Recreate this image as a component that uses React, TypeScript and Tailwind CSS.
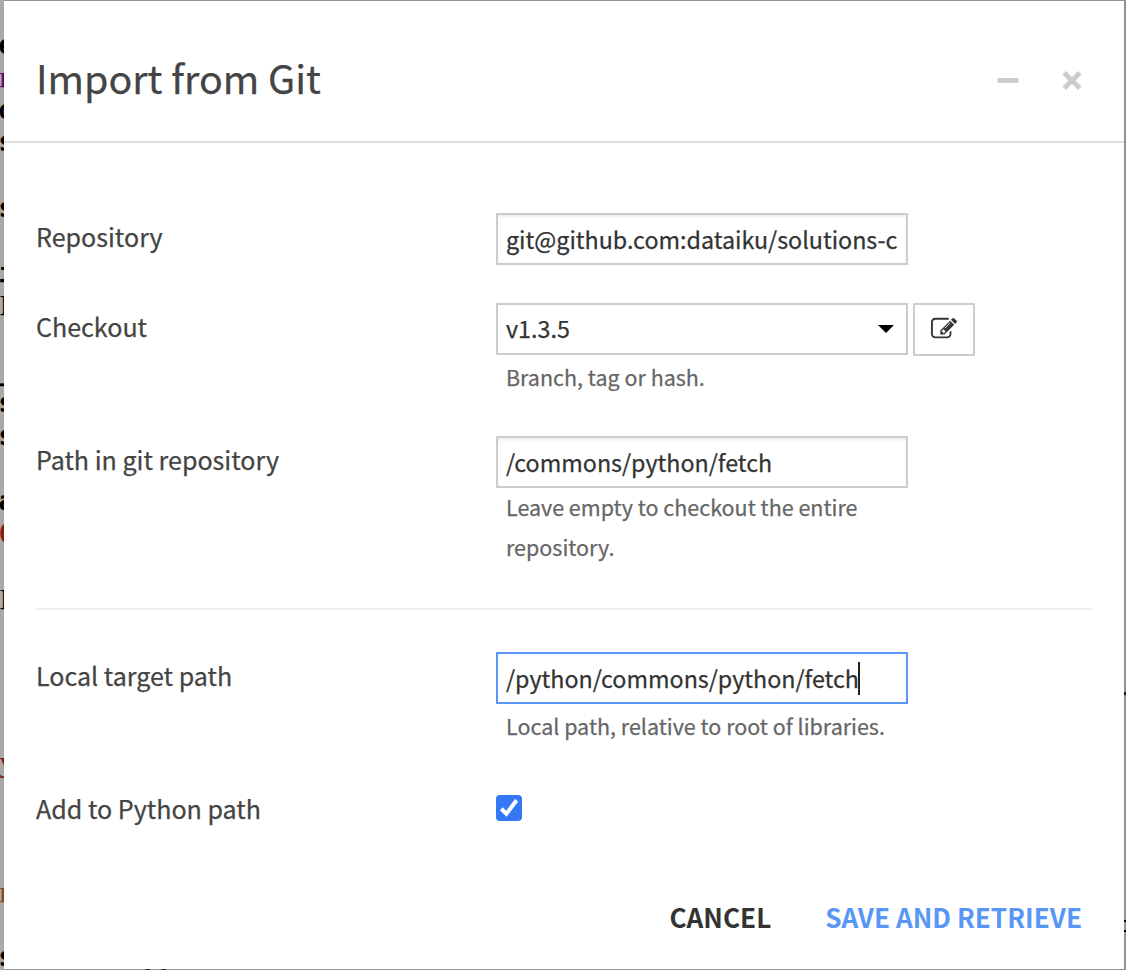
import React from "react";

const serif = "font-['Liberation_Serif',serif] font-normal text-[30px] pl-[1px]";

const codeLines: [string, string][] = [
  ["", ""], ["e", ""], ["r", `text-[#5b0a78] ${serif}`], ["o", ""], ["s", ""], ["", ""], ["s", ""], ["", ""],
  ["i", ""], ["I", serif], ["", ""], ["_", ""], ["s", ""], ["s", ""], ["", ""], ["a", ""],
  ["C", "text-[#8b1a1a]"], ["", ""], ["I", serif], ["", ""], ["", ""], ["", ""], ["", ""],
  ["y", `text-[#7b1d1d] ${serif}`], ["", ""], ["", ""], ["", ""], ["r", `text-[#7d4a1e] ${serif}`], ["", ""], ["s", ""],
];

function Row({ label, className, children }: { label: string; className: string; children: React.ReactNode }) {
  return (
    <div className={`flex ${className}`}>
      <div className="w-[460px] shrink-0 pt-[3px] text-[25.07px] leading-[40px] text-[#444444]">{label}</div>
      <div className="w-[480px]">{children}</div>
    </div>
  );
}

const fieldClass =
  "flex h-[52px] w-[412px] items-center overflow-hidden whitespace-pre border-2 pl-2 pr-[6px] text-[23.28px] leading-[48px] text-[#333333] outline-none [-webkit-text-stroke:0.25px]";
const helpClass = "w-[412px] pl-[10px] text-[21.49px] leading-[40px] text-[#666666]";

export default function App() {
  return (
    <div className="relative h-[970px] w-[1126px] overflow-hidden bg-[#929292] font-['Noto_Sans_CJK_SC',sans-serif] [-webkit-text-stroke:0.25px]">
      <div
        aria-hidden="true"
        className="absolute left-0 top-0 h-[970px] w-1 overflow-hidden bg-[#aaa9a8] font-['DejaVu_Sans_Mono',monospace] text-[26px] font-bold leading-[32.6px] text-black"
      >
        <div className="-ml-[1.5px] -mt-[4px]">
          {codeLines.map(([ch, color], i) => (
            <div key={i} className={`h-[32.6px] leading-[32.6px] ${color}`}>{ch}</div>
          ))}
        </div>
      </div>
      <div aria-hidden="true" className="absolute right-0 top-[692px] h-[3px] w-[2px] bg-[#1c1c1c]" />
      <div aria-hidden="true" className="absolute right-0 top-[920px] h-[12px] w-[2px] border-y-2 border-black" />
      <div aria-hidden="true" className="absolute left-[145px] top-[969px] h-px w-[5px] bg-[#333333]" />
      <div aria-hidden="true" className="absolute left-[161px] top-[969px] h-px w-[5px] bg-[#333333]" />
      <div className="relative ml-1 h-[969px] w-[1120px] pt-px">
        <div className="flex h-[968px] flex-col bg-white">
          <header className="flex h-[142px] shrink-0 items-center justify-between border-b-2 border-[#dddddd] pl-8 pr-[41px]">
            <h1 className="pt-[12px] text-[39.4px] leading-[60px] text-[#444444]">Import from Git</h1>
            <div className="flex items-center gap-[42px] pt-[19px]">
              <svg width="22" height="22" viewBox="0 0 22 22">
                <rect x="0.5" y="8" width="21" height="5" rx="0.8" fill="#cccccc" />
              </svg>
              <svg width="22" height="22" viewBox="0 0 22 22">
                <path d="M3.2 2.7L18.8 18.3M18.8 2.7L3.2 18.3" stroke="#cccccc" strokeWidth="5" />
              </svg>
            </div>
          </header>
          <main className="flex flex-col px-8 pt-[70px]">
            <Row label="Repository" className="h-[90px]">
              <input
                readOnly
                value="git@github.com:dataiku/solutions-c"
                className={`${fieldClass} border-[#cccccc] shadow-[inset_0_2px_3px_rgba(0,0,0,0.075)]`}
              />
            </Row>
            <Row label="Checkout" className="h-[133px]">
              <div className="flex gap-[5px]">
                <div className={`${fieldClass} justify-between border-[#cccccc]`}>
                  <span className="pb-[2px]">v1.3.5</span>
                  <svg width="16" height="8" viewBox="0 0 16 8" className="mr-[6px]">
                    <path d="M0 0H16L8 8Z" fill="#000" />
                  </svg>
                </div>
                <button aria-label="Edit" className="flex h-[53px] w-[62px] items-center justify-center border-2 border-[#cccccc] pb-[2px] text-[#333333]">
                  <svg width="26" height="26" viewBox="0 0 1792 1792" fill="currentColor">
                    <path d="M888 1184l116-116-152-152-116 116v56h96v96h56zm440-720q-16-16-33 1l-350 350q-17 17-1 33t33-1l350-350q17-17 1-33zm80 594v190q0 119-84.5 203.5t-203.5 84.5h-832q-119 0-203.5-84.5t-84.5-203.5v-832q0-119 84.5-203.5t203.5-84.5h832q63 0 117 25 15 7 18 23 3 17-9 29l-49 49q-14 14-32 8-23-6-45-6h-832q-66 0-113 47t-47 113v832q0 66 47 113t113 47h832q66 0 113-47t47-113v-126q0-13 9-22l64-64q15-15 35-7t20 29zm-96-738l288 288-672 672h-288v-288zm444 132l-92 92-288-288 92-92q28-28 68-28t68 28l152 152q28 28 28 68t-28 68z" />
                  </svg>
                </button>
              </div>
              <p className={`${helpClass} pt-px`}>Branch, tag or hash.</p>
            </Row>
            <Row label="Path in git repository" className="h-[172px]">
              <input
                readOnly
                value="/commons/python/fetch"
                className={`${fieldClass} border-[#cccccc] shadow-[inset_0_2px_3px_rgba(0,0,0,0.075)]`}
              />
              <p className={`${helpClass} -mt-px`}>Leave empty to checkout the entire repository.</p>
            </Row>
            <div className="mb-[42px] h-[2px] bg-[#eeeeee]" />
            <Row label="Local target path" className="h-[133px]">
              <div className={`${fieldClass} border-[#5897f5]`}>
                <span>/python/commons/python/fetch</span>
                <span className="-ml-px h-[33px] w-[2px] bg-[#222222]" />
              </div>
              <p className={`${helpClass} pt-[2px]`}>Local path, relative to root of libraries.</p>
            </Row>
            <Row label="Add to Python path" className="h-[70px]">
              <div role="checkbox" aria-checked="true" className="mt-[10px] flex size-[26px] items-center justify-center rounded-[4px] bg-[#3478f6]">
                <svg width="26" height="26" viewBox="0 0 26 26">
                  <path d="M5.3 13.8L10.4 18.8L20.6 5.2" fill="none" stroke="#fff" strokeWidth="4" />
                </svg>
              </div>
            </Row>
          </main>
          <footer className="mt-auto flex h-[104px] items-center justify-end gap-[54px] pr-[42px] text-[26.15px] font-bold leading-[40px] [-webkit-text-stroke:0px]">
            <button className="text-[#333333]">CANCEL</button>
            <button className="text-[#5897f5]">SAVE AND RETRIEVE</button>
          </footer>
        </div>
      </div>
    </div>
  );
}
